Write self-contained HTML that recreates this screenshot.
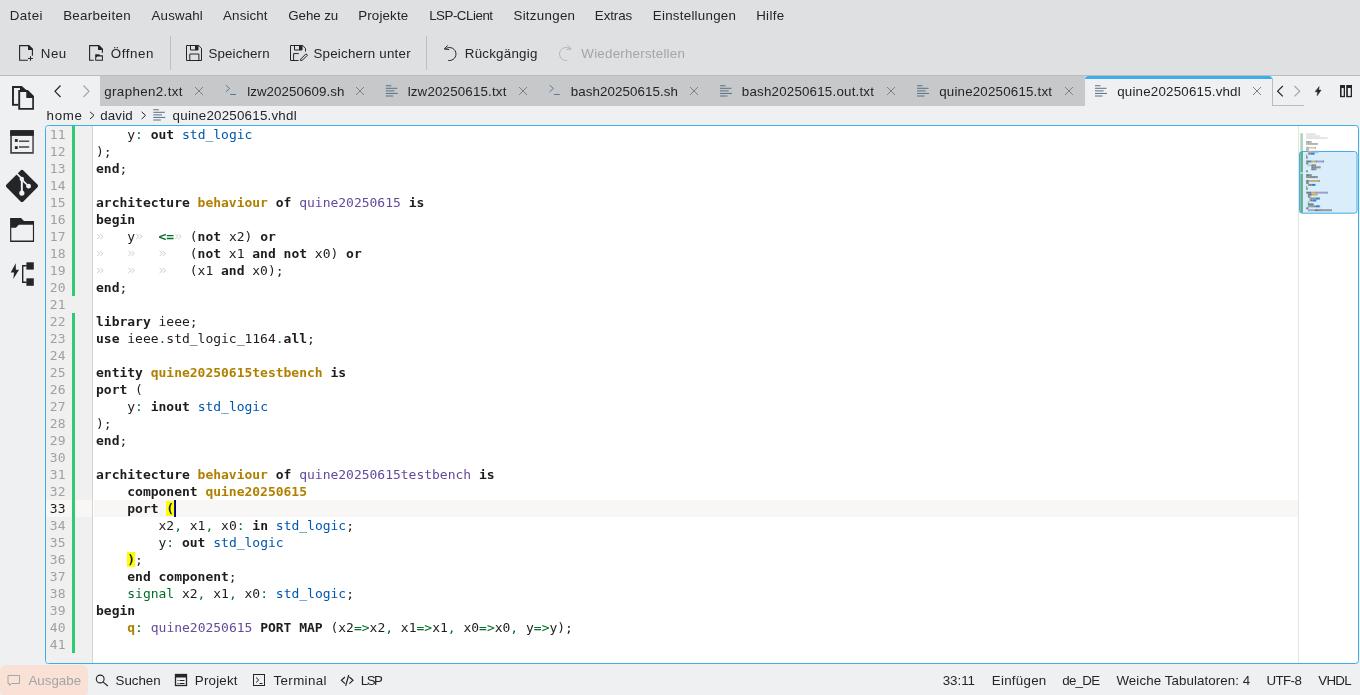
<!DOCTYPE html>
<html lang="de">
<head>
<meta charset="utf-8">
<title>quine20250615.vhdl — Kate</title>
<style>
html,body{margin:0;padding:0}
body{width:1360px;height:695px;overflow:hidden;position:relative;background:#eff0f1;
 font-family:"Liberation Sans","DejaVu Sans",sans-serif;font-size:13.33px;color:#232629}
.abs{position:absolute}
#header{left:0;top:0;width:1360px;height:75px;background:#dee0e2}
#hline{left:0;top:75px;width:1360px;height:1px;background:#bbbdbf}
.tsep{top:36px;width:1px;height:34px;background:#bcbec0}
#tabs{left:100px;top:76px;width:985px;height:30px;background:#c6c8c9}
#atab{left:1085px;top:76px;width:187px;height:30px;background:#eff0f1;border-top:3px solid #3daee9;
 border-radius:3px 3px 0 0;box-sizing:border-box}
#atabr{left:1272px;top:78px;width:1px;height:28px;background:#b9bbbd}
#atabb{left:1272px;top:105px;width:32px;height:1px;background:#b9bbbd}
#frame{left:45px;top:125px;width:1314px;height:539px;box-sizing:border-box;border:1px solid #3daee9;
 border-radius:3.5px;background:#fff;overflow:hidden}
#gutter{left:46px;top:126px;width:46px;height:537px;background:#f0f0f0;border-radius:3px 0 0 3px}
#gsep{left:92px;top:126px;width:1px;height:537px;background:#d5d5d5}
#curline{left:46px;top:500px;width:1252px;height:17px;background:#f8f7f6}
.mod{left:72px;width:3px;background:#2ecc71}
#mmsep{left:1298px;top:126px;width:1px;height:537px;background:#e4e4e4}
#ausg{left:0;top:665px;width:88px;height:32px;background:#f9e1d6;border-radius:6px}
.t{position:absolute;white-space:pre;line-height:16px;height:16px}
.m{color:#232629}.d{color:#a3a6a9}.g{color:#a3a5a7}
.ln,.no{position:absolute;font-family:"DejaVu Sans Mono","Liberation Mono",monospace;font-size:13px;
 line-height:17px;height:17px;white-space:pre;letter-spacing:-0.013px}
.ln{left:96px;color:#1f1c1b}
.no{left:46px;width:19.5px;text-align:right;color:#a0a0a0}
.no.cur{color:#1e1e1e}
.k{font-weight:bold}
.g{color:#006e28}.gk{color:#006e28;font-weight:bold}
.s{color:#006e28}
.b{color:#0057ae}
.y{color:#b08000;font-weight:bold}
.v{color:#644a9b}
.bm{font-weight:bold;background:#ffff00}
.t.g{color:#a3a5a7}
#caret{left:174px;top:500px;width:2px;height:17px;background:linear-gradient(90deg,#0606e4 0 50%,#0c0c0c 50% 100%)}
svg{position:absolute;left:0;top:0}
</style>
</head>
<body>
<div class="abs" id="header"></div>
<div class="abs" id="hline"></div>
<div class="abs tsep" style="left:170px"></div>
<div class="abs tsep" style="left:426px"></div>
<div class="abs" id="tabs"></div>
<div class="abs" id="atab"></div>
<div class="abs" id="atabr"></div>
<div class="abs" id="atabb"></div>
<div class="abs" id="frame"></div>
<div class="abs" id="gutter"></div>
<div class="abs" id="curline"></div>
<div class="abs" id="gsep"></div>
<div class="abs" style="left:93px;top:500px;width:1px;height:17px;background:#fff"></div>
<div class="abs mod" style="top:126px;height:170px"></div>
<div class="abs mod" style="top:313px;height:340px"></div>
<div class="abs" id="mmsep"></div>
<div class="abs" id="ausg"></div>

<div id="txt" style="position:absolute;left:0;top:0;width:1360px;height:695px;will-change:transform">
<!-- UI text -->
<span class="t m" style="left:9.84px;top:8.40px;letter-spacing:0.374px">Datei</span>
<span class="t m" style="left:63.14px;top:8.40px;letter-spacing:0.332px">Bearbeiten</span>
<span class="t m" style="left:151.61px;top:8.40px;letter-spacing:0.124px">Auswahl</span>
<span class="t m" style="left:223.12px;top:8.40px;letter-spacing:0.125px">Ansicht</span>
<span class="t m" style="left:288.31px;top:8.40px;letter-spacing:-0.093px">Gehe zu</span>
<span class="t m" style="left:358.14px;top:8.40px;letter-spacing:0.175px">Projekte</span>
<span class="t m" style="left:429.14px;top:8.40px;letter-spacing:-0.471px">LSP-CLient</span>
<span class="t m" style="left:513.46px;top:8.40px;letter-spacing:0.283px">Sitzungen</span>
<span class="t m" style="left:594.84px;top:8.40px;letter-spacing:-0.072px">Extras</span>
<span class="t m" style="left:652.84px;top:8.40px;letter-spacing:0.252px">Einstellungen</span>
<span class="t m" style="left:756.14px;top:8.40px;letter-spacing:0.367px">Hilfe</span>
<span class="t m" style="left:40.78px;top:46.40px;letter-spacing:0.500px">Neu</span>
<span class="t m" style="left:110.87px;top:46.40px;letter-spacing:0.555px">Öffnen</span>
<span class="t m" style="left:208.46px;top:46.40px;letter-spacing:0.135px">Speichern</span>
<span class="t m" style="left:313.46px;top:46.40px;letter-spacing:0.217px">Speichern unter</span>
<span class="t m" style="left:464.84px;top:46.40px;letter-spacing:0.232px">Rückgängig</span>
<span class="t d" style="left:581.36px;top:46.40px;letter-spacing:0.233px">Wiederherstellen</span>
<span class="t m" style="left:104.22px;top:84.40px;letter-spacing:0.381px">graphen2.txt</span>
<span class="t m" style="left:247.15px;top:84.40px;letter-spacing:0.073px">lzw20250609.sh</span>
<span class="t m" style="left:407.67px;top:84.40px;letter-spacing:0.169px">lzw20250615.txt</span>
<span class="t m" style="left:570.80px;top:84.40px;letter-spacing:0.081px">bash20250615.sh</span>
<span class="t m" style="left:741.80px;top:84.40px;letter-spacing:0.207px">bash20250615.out.txt</span>
<span class="t m" style="left:939.21px;top:84.40px;letter-spacing:0.191px">quine20250615.txt</span>
<span class="t m" style="left:1117.22px;top:84.40px;letter-spacing:0.201px">quine20250615.vhdl</span>
<span class="t m" style="left:46.55px;top:107.90px;letter-spacing:0.676px">home</span>
<span class="t m" style="left:100.22px;top:107.90px;letter-spacing:0.155px">david</span>
<span class="t m" style="left:172.61px;top:107.90px;letter-spacing:0.232px">quine20250615.vhdl</span>
<span class="t g" style="left:28.40px;top:673.40px;letter-spacing:0.007px">Ausgabe</span>
<span class="t m" style="left:115.57px;top:673.40px;letter-spacing:-0.045px">Suchen</span>
<span class="t m" style="left:194.85px;top:673.40px;letter-spacing:0.196px">Projekt</span>
<span class="t m" style="left:273.61px;top:673.40px;letter-spacing:0.343px">Terminal</span>
<span class="t m" style="left:360.85px;top:673.40px;letter-spacing:-1.542px">LSP</span>
<span class="t m" style="left:942.65px;top:673.40px;letter-spacing:-0.005px">33:11</span>
<span class="t m" style="left:991.78px;top:673.40px;letter-spacing:0.262px">Einfügen</span>
<span class="t m" style="left:1062.22px;top:673.40px;letter-spacing:-0.731px">de_DE</span>
<span class="t m" style="left:1116.44px;top:673.40px;letter-spacing:0.080px">Weiche Tabulatoren: 4</span>
<span class="t m" style="left:1266.45px;top:673.40px;letter-spacing:-0.586px">UTF-8</span>
<span class="t m" style="left:1318.33px;top:673.40px;letter-spacing:-0.735px">VHDL</span>

<!-- line numbers -->
<div class="no" style="top:126px">11</div>
<div class="no" style="top:143px">12</div>
<div class="no" style="top:160px">13</div>
<div class="no" style="top:177px">14</div>
<div class="no" style="top:194px">15</div>
<div class="no" style="top:211px">16</div>
<div class="no" style="top:228px">17</div>
<div class="no" style="top:245px">18</div>
<div class="no" style="top:262px">19</div>
<div class="no" style="top:279px">20</div>
<div class="no" style="top:296px">21</div>
<div class="no" style="top:313px">22</div>
<div class="no" style="top:330px">23</div>
<div class="no" style="top:347px">24</div>
<div class="no" style="top:364px">25</div>
<div class="no" style="top:381px">26</div>
<div class="no" style="top:398px">27</div>
<div class="no" style="top:415px">28</div>
<div class="no" style="top:432px">29</div>
<div class="no" style="top:449px">30</div>
<div class="no" style="top:466px">31</div>
<div class="no" style="top:483px">32</div>
<div class="no cur" style="top:500px">33</div>
<div class="no" style="top:517px">34</div>
<div class="no" style="top:534px">35</div>
<div class="no" style="top:551px">36</div>
<div class="no" style="top:568px">37</div>
<div class="no" style="top:585px">38</div>
<div class="no" style="top:602px">39</div>
<div class="no" style="top:619px">40</div>
<div class="no" style="top:636px">41</div>

<!-- code -->
<div class="ln" style="top:126px">    y<span class="g">:</span> <span class="k">out</span> <span class="b">std_logic</span></div>
<div class="ln" style="top:143px">);</div>
<div class="ln" style="top:160px"><span class="k">end</span>;</div>
<div class="ln" style="top:177px"></div>
<div class="ln" style="top:194px"><span class="k">architecture</span> <span class="y">behaviour</span> <span class="k">of</span> <span class="v">quine20250615</span> <span class="k">is</span></div>
<div class="ln" style="top:211px"><span class="k">begin</span></div>
<div class="ln" style="top:228px">    y   <span class="gk">&lt;=</span>  (<span class="k">not</span> x2) <span class="k">or</span></div>
<div class="ln" style="top:245px">            (<span class="k">not</span> x1 <span class="k">and</span> <span class="k">not</span> x0) <span class="k">or</span></div>
<div class="ln" style="top:262px">            (x1 <span class="k">and</span> x0);</div>
<div class="ln" style="top:279px"><span class="k">end</span>;</div>
<div class="ln" style="top:296px"></div>
<div class="ln" style="top:313px"><span class="k">library</span> ieee;</div>
<div class="ln" style="top:330px"><span class="k">use</span> ieee<span class="g">.</span>std_logic_1164<span class="g">.</span><span class="k">all</span>;</div>
<div class="ln" style="top:347px"></div>
<div class="ln" style="top:364px"><span class="k">entity</span> <span class="y">quine20250615testbench</span> <span class="k">is</span></div>
<div class="ln" style="top:381px"><span class="k">port</span> (</div>
<div class="ln" style="top:398px">    y<span class="g">:</span> <span class="k">inout</span> <span class="b">std_logic</span></div>
<div class="ln" style="top:415px">);</div>
<div class="ln" style="top:432px"><span class="k">end</span>;</div>
<div class="ln" style="top:449px"></div>
<div class="ln" style="top:466px"><span class="k">architecture</span> <span class="y">behaviour</span> <span class="k">of</span> <span class="v">quine20250615testbench</span> <span class="k">is</span></div>
<div class="ln" style="top:483px">    <span class="k">component</span> <span class="y">quine20250615</span></div>
<div class="ln cur" style="top:500px">    <span class="k">port</span> <span class="bm">(</span></div>
<div class="ln" style="top:517px">        x2<span class="g">,</span> x1<span class="g">,</span> x0<span class="g">:</span> <span class="k">in</span> <span class="b">std_logic</span>;</div>
<div class="ln" style="top:534px">        y<span class="g">:</span> <span class="k">out</span> <span class="b">std_logic</span></div>
<div class="ln" style="top:551px">    <span class="bm">)</span>;</div>
<div class="ln" style="top:568px">    <span class="k">end component</span>;</div>
<div class="ln" style="top:585px">    <span class="s">signal</span> x2<span class="g">,</span> x1<span class="g">,</span> x0<span class="g">:</span> <span class="b">std_logic</span>;</div>
<div class="ln" style="top:602px"><span class="k">begin</span></div>
<div class="ln" style="top:619px">    <span class="y">q</span><span class="g">:</span> <span class="v">quine20250615</span> <span class="k">PORT MAP</span> (x2<span class="g">=&gt;</span>x2<span class="g">,</span> x1<span class="g">=&gt;</span>x1<span class="g">,</span> x0<span class="g">=&gt;</span>x0<span class="g">,</span> y<span class="g">=&gt;</span>y);</div>
<div class="ln" style="top:636px"></div>
</div>
<div class="abs" id="caret"></div>

<svg width="1360" height="695" viewBox="0 0 1360 695" fill="none">
<!-- tab markers -->
<g stroke="#c6c6c6" stroke-width="0.9" fill="none"><path d="M97.1 234.1l2.8 2.4l-2.8 2.4M100.3 234.1l2.8 2.4l-2.8 2.4"/><path d="M136.2 234.1l2.8 2.4l-2.8 2.4M139.4 234.1l2.8 2.4l-2.8 2.4"/><path d="M175.2 234.1l2.8 2.4l-2.8 2.4M178.4 234.1l2.8 2.4l-2.8 2.4"/><path d="M97.1 251.1l2.8 2.4l-2.8 2.4M100.3 251.1l2.8 2.4l-2.8 2.4"/><path d="M128.4 251.1l2.8 2.4l-2.8 2.4M131.6 251.1l2.8 2.4l-2.8 2.4"/><path d="M159.6 251.1l2.8 2.4l-2.8 2.4M162.8 251.1l2.8 2.4l-2.8 2.4"/><path d="M97.1 268.1l2.8 2.4l-2.8 2.4M100.3 268.1l2.8 2.4l-2.8 2.4"/><path d="M128.4 268.1l2.8 2.4l-2.8 2.4M131.6 268.1l2.8 2.4l-2.8 2.4"/><path d="M159.6 268.1l2.8 2.4l-2.8 2.4M162.8 268.1l2.8 2.4l-2.8 2.4"/></g>

<!-- minimap -->
<rect x="1300.3" y="133.2" width="2.6" height="18.3" fill="#a9d6b7"/>
<rect x="1299.5" y="151.5" width="57.5" height="61.7" rx="2.5" fill="#d9edfa" stroke="#3daee9" stroke-width="1"/>
<rect x="1300.3" y="152" width="2.6" height="20.4" fill="#5fab8b"/>
<rect x="1300.3" y="173.6" width="2.6" height="39" fill="#5fab8b"/>
<g><rect x="1306.20" y="133.20" width="9.29" height="1.95" fill="#e4e4e4"/><rect x="1306.20" y="135.15" width="13.49" height="1.95" fill="#e4e4e4"/><rect x="1306.20" y="137.10" width="21.47" height="1.95" fill="#e4e4e4"/><rect x="1306.20" y="141.00" width="2.99" height="1.95" fill="#a6aaad"/><rect x="1309.14" y="141.00" width="2.57" height="1.95" fill="#b0b4b7"/><rect x="1306.20" y="142.95" width="1.31" height="1.95" fill="#a6aaad"/><rect x="1307.46" y="142.95" width="10.55" height="1.95" fill="#b0b4b7"/><rect x="1306.20" y="146.85" width="2.57" height="1.95" fill="#a6aaad"/><rect x="1308.72" y="146.85" width="0.47" height="1.95" fill="#b0b4b7"/><rect x="1309.14" y="146.85" width="5.51" height="1.95" fill="#e0d09c"/><rect x="1314.60" y="146.85" width="0.47" height="1.95" fill="#b0b4b7"/><rect x="1315.02" y="146.85" width="0.89" height="1.95" fill="#a6aaad"/><rect x="1306.20" y="148.80" width="1.73" height="1.95" fill="#a6aaad"/><rect x="1307.88" y="148.80" width="0.89" height="1.95" fill="#b0b4b7"/><rect x="1307.88" y="150.75" width="4.25" height="1.95" fill="#b0b4b7"/><rect x="1312.08" y="150.75" width="0.47" height="1.95" fill="#b0b4b7"/><rect x="1312.50" y="150.75" width="0.47" height="1.95" fill="#b0b4b7"/><rect x="1312.92" y="150.75" width="0.89" height="1.95" fill="#a6aaad"/><rect x="1313.76" y="150.75" width="0.47" height="1.95" fill="#b0b4b7"/><rect x="1314.18" y="150.75" width="3.83" height="1.95" fill="#86b4e2"/><rect x="1317.96" y="150.75" width="0.47" height="1.95" fill="#b0b4b7"/><rect x="1307.88" y="152.70" width="0.47" height="1.95" fill="#7f8a92"/><rect x="1308.30" y="152.70" width="0.47" height="1.95" fill="#7f8a92"/><rect x="1308.72" y="152.70" width="0.47" height="1.95" fill="#7f8a92"/><rect x="1309.14" y="152.70" width="1.31" height="1.95" fill="#727e86"/><rect x="1310.40" y="152.70" width="0.47" height="1.95" fill="#7f8a92"/><rect x="1310.82" y="152.70" width="3.83" height="1.95" fill="#2f7fcc"/><rect x="1306.20" y="154.65" width="0.89" height="1.95" fill="#7f8a92"/><rect x="1306.20" y="156.60" width="1.31" height="1.95" fill="#727e86"/><rect x="1307.46" y="156.60" width="0.47" height="1.95" fill="#7f8a92"/><rect x="1306.20" y="160.50" width="5.09" height="1.95" fill="#727e86"/><rect x="1311.24" y="160.50" width="0.47" height="1.95" fill="#7f8a92"/><rect x="1311.66" y="160.50" width="3.83" height="1.95" fill="#c4b272"/><rect x="1315.44" y="160.50" width="0.47" height="1.95" fill="#7f8a92"/><rect x="1315.86" y="160.50" width="0.89" height="1.95" fill="#727e86"/><rect x="1316.70" y="160.50" width="0.47" height="1.95" fill="#7f8a92"/><rect x="1317.12" y="160.50" width="5.51" height="1.95" fill="#a39ad6"/><rect x="1322.58" y="160.50" width="0.47" height="1.95" fill="#7f8a92"/><rect x="1323.00" y="160.50" width="0.89" height="1.95" fill="#727e86"/><rect x="1306.20" y="162.45" width="2.15" height="1.95" fill="#727e86"/><rect x="1307.88" y="164.40" width="0.47" height="1.95" fill="#7f8a92"/><rect x="1309.56" y="164.40" width="0.89" height="1.95" fill="#6fae8c"/><rect x="1311.24" y="164.40" width="0.47" height="1.95" fill="#7f8a92"/><rect x="1311.66" y="164.40" width="1.31" height="1.95" fill="#727e86"/><rect x="1312.92" y="164.40" width="2.15" height="1.95" fill="#7f8a92"/><rect x="1315.02" y="164.40" width="0.89" height="1.95" fill="#727e86"/><rect x="1311.24" y="166.35" width="0.47" height="1.95" fill="#7f8a92"/><rect x="1311.66" y="166.35" width="1.31" height="1.95" fill="#727e86"/><rect x="1312.92" y="166.35" width="1.73" height="1.95" fill="#7f8a92"/><rect x="1314.60" y="166.35" width="1.31" height="1.95" fill="#727e86"/><rect x="1315.86" y="166.35" width="0.47" height="1.95" fill="#7f8a92"/><rect x="1316.28" y="166.35" width="1.31" height="1.95" fill="#727e86"/><rect x="1317.54" y="166.35" width="2.15" height="1.95" fill="#7f8a92"/><rect x="1319.64" y="166.35" width="0.89" height="1.95" fill="#727e86"/><rect x="1311.24" y="168.30" width="1.73" height="1.95" fill="#7f8a92"/><rect x="1312.92" y="168.30" width="1.31" height="1.95" fill="#727e86"/><rect x="1314.18" y="168.30" width="2.15" height="1.95" fill="#7f8a92"/><rect x="1306.20" y="170.25" width="1.31" height="1.95" fill="#727e86"/><rect x="1307.46" y="170.25" width="0.47" height="1.95" fill="#7f8a92"/><rect x="1306.20" y="174.15" width="2.99" height="1.95" fill="#727e86"/><rect x="1309.14" y="174.15" width="2.57" height="1.95" fill="#7f8a92"/><rect x="1306.20" y="176.10" width="1.31" height="1.95" fill="#727e86"/><rect x="1307.46" y="176.10" width="2.15" height="1.95" fill="#7f8a92"/><rect x="1309.56" y="176.10" width="0.47" height="1.95" fill="#7f8a92"/><rect x="1309.98" y="176.10" width="5.93" height="1.95" fill="#7f8a92"/><rect x="1315.86" y="176.10" width="0.47" height="1.95" fill="#7f8a92"/><rect x="1316.28" y="176.10" width="1.31" height="1.95" fill="#727e86"/><rect x="1317.54" y="176.10" width="0.47" height="1.95" fill="#7f8a92"/><rect x="1306.20" y="180.00" width="2.57" height="1.95" fill="#727e86"/><rect x="1308.72" y="180.00" width="0.47" height="1.95" fill="#7f8a92"/><rect x="1309.14" y="180.00" width="9.29" height="1.95" fill="#c4b272"/><rect x="1318.38" y="180.00" width="0.47" height="1.95" fill="#7f8a92"/><rect x="1318.80" y="180.00" width="0.89" height="1.95" fill="#727e86"/><rect x="1306.20" y="181.95" width="1.73" height="1.95" fill="#727e86"/><rect x="1307.88" y="181.95" width="0.89" height="1.95" fill="#7f8a92"/><rect x="1307.88" y="183.90" width="0.47" height="1.95" fill="#7f8a92"/><rect x="1308.30" y="183.90" width="0.47" height="1.95" fill="#7f8a92"/><rect x="1308.72" y="183.90" width="0.47" height="1.95" fill="#7f8a92"/><rect x="1309.14" y="183.90" width="2.15" height="1.95" fill="#727e86"/><rect x="1311.24" y="183.90" width="0.47" height="1.95" fill="#7f8a92"/><rect x="1311.66" y="183.90" width="3.83" height="1.95" fill="#2f7fcc"/><rect x="1306.20" y="185.85" width="0.89" height="1.95" fill="#7f8a92"/><rect x="1306.20" y="187.80" width="1.31" height="1.95" fill="#727e86"/><rect x="1307.46" y="187.80" width="0.47" height="1.95" fill="#7f8a92"/><rect x="1306.20" y="191.70" width="5.09" height="1.95" fill="#727e86"/><rect x="1311.24" y="191.70" width="0.47" height="1.95" fill="#7f8a92"/><rect x="1311.66" y="191.70" width="3.83" height="1.95" fill="#c4b272"/><rect x="1315.44" y="191.70" width="0.47" height="1.95" fill="#7f8a92"/><rect x="1315.86" y="191.70" width="0.89" height="1.95" fill="#727e86"/><rect x="1316.70" y="191.70" width="0.47" height="1.95" fill="#7f8a92"/><rect x="1317.12" y="191.70" width="9.29" height="1.95" fill="#a39ad6"/><rect x="1326.36" y="191.70" width="0.47" height="1.95" fill="#7f8a92"/><rect x="1326.78" y="191.70" width="0.89" height="1.95" fill="#727e86"/><rect x="1307.88" y="193.65" width="3.83" height="1.95" fill="#727e86"/><rect x="1311.66" y="193.65" width="0.47" height="1.95" fill="#7f8a92"/><rect x="1312.08" y="193.65" width="5.51" height="1.95" fill="#c4b272"/><rect x="1307.88" y="195.60" width="1.73" height="1.95" fill="#727e86"/><rect x="1309.56" y="195.60" width="0.47" height="1.95" fill="#7f8a92"/><rect x="1309.98" y="195.60" width="0.47" height="1.95" fill="#727e86"/><rect x="1309.56" y="197.55" width="0.89" height="1.95" fill="#7f8a92"/><rect x="1310.40" y="197.55" width="0.47" height="1.95" fill="#7f8a92"/><rect x="1310.82" y="197.55" width="1.31" height="1.95" fill="#7f8a92"/><rect x="1312.08" y="197.55" width="0.47" height="1.95" fill="#7f8a92"/><rect x="1312.50" y="197.55" width="1.31" height="1.95" fill="#7f8a92"/><rect x="1313.76" y="197.55" width="0.47" height="1.95" fill="#7f8a92"/><rect x="1314.18" y="197.55" width="0.47" height="1.95" fill="#7f8a92"/><rect x="1314.60" y="197.55" width="0.89" height="1.95" fill="#727e86"/><rect x="1315.44" y="197.55" width="0.47" height="1.95" fill="#7f8a92"/><rect x="1315.86" y="197.55" width="3.83" height="1.95" fill="#2f7fcc"/><rect x="1319.64" y="197.55" width="0.47" height="1.95" fill="#7f8a92"/><rect x="1309.56" y="199.50" width="0.47" height="1.95" fill="#7f8a92"/><rect x="1309.98" y="199.50" width="0.47" height="1.95" fill="#7f8a92"/><rect x="1310.40" y="199.50" width="0.47" height="1.95" fill="#7f8a92"/><rect x="1310.82" y="199.50" width="1.31" height="1.95" fill="#727e86"/><rect x="1312.08" y="199.50" width="0.47" height="1.95" fill="#7f8a92"/><rect x="1312.50" y="199.50" width="3.83" height="1.95" fill="#2f7fcc"/><rect x="1307.88" y="201.45" width="0.47" height="1.95" fill="#727e86"/><rect x="1308.30" y="201.45" width="0.47" height="1.95" fill="#7f8a92"/><rect x="1307.88" y="203.40" width="5.51" height="1.95" fill="#727e86"/><rect x="1313.34" y="203.40" width="0.47" height="1.95" fill="#7f8a92"/><rect x="1307.88" y="205.35" width="2.57" height="1.95" fill="#6fae8c"/><rect x="1310.40" y="205.35" width="1.31" height="1.95" fill="#7f8a92"/><rect x="1311.66" y="205.35" width="0.47" height="1.95" fill="#7f8a92"/><rect x="1312.08" y="205.35" width="1.31" height="1.95" fill="#7f8a92"/><rect x="1313.34" y="205.35" width="0.47" height="1.95" fill="#7f8a92"/><rect x="1313.76" y="205.35" width="1.31" height="1.95" fill="#7f8a92"/><rect x="1315.02" y="205.35" width="0.47" height="1.95" fill="#7f8a92"/><rect x="1315.44" y="205.35" width="0.47" height="1.95" fill="#7f8a92"/><rect x="1315.86" y="205.35" width="3.83" height="1.95" fill="#2f7fcc"/><rect x="1319.64" y="205.35" width="0.47" height="1.95" fill="#7f8a92"/><rect x="1306.20" y="207.30" width="2.15" height="1.95" fill="#727e86"/><rect x="1307.88" y="209.25" width="0.47" height="1.95" fill="#c4b272"/><rect x="1308.30" y="209.25" width="0.47" height="1.95" fill="#7f8a92"/><rect x="1308.72" y="209.25" width="0.47" height="1.95" fill="#7f8a92"/><rect x="1309.14" y="209.25" width="5.51" height="1.95" fill="#a39ad6"/><rect x="1314.60" y="209.25" width="0.47" height="1.95" fill="#7f8a92"/><rect x="1315.02" y="209.25" width="3.41" height="1.95" fill="#727e86"/><rect x="1318.38" y="209.25" width="1.73" height="1.95" fill="#7f8a92"/><rect x="1320.06" y="209.25" width="0.89" height="1.95" fill="#7f8a92"/><rect x="1320.90" y="209.25" width="0.89" height="1.95" fill="#7f8a92"/><rect x="1321.74" y="209.25" width="0.47" height="1.95" fill="#7f8a92"/><rect x="1322.16" y="209.25" width="1.31" height="1.95" fill="#7f8a92"/><rect x="1323.42" y="209.25" width="0.89" height="1.95" fill="#7f8a92"/><rect x="1324.26" y="209.25" width="0.89" height="1.95" fill="#7f8a92"/><rect x="1325.10" y="209.25" width="0.47" height="1.95" fill="#7f8a92"/><rect x="1325.52" y="209.25" width="1.31" height="1.95" fill="#7f8a92"/><rect x="1326.78" y="209.25" width="0.89" height="1.95" fill="#7f8a92"/><rect x="1327.62" y="209.25" width="0.89" height="1.95" fill="#7f8a92"/><rect x="1328.46" y="209.25" width="0.47" height="1.95" fill="#7f8a92"/><rect x="1328.88" y="209.25" width="0.89" height="1.95" fill="#7f8a92"/><rect x="1329.72" y="209.25" width="0.89" height="1.95" fill="#7f8a92"/><rect x="1330.56" y="209.25" width="1.31" height="1.95" fill="#7f8a92"/></g>

<!-- toolbar icons -->
<g stroke="#232629" stroke-width="1" fill="none">
 <!-- new -->
 <path d="M27.84 60.2H19.6V45.6H28.7L32.4 49.3V55.7" stroke-width="1.1" stroke-linejoin="miter"/>
 <path d="M28.03 45.05H28.96L32.9 48.98V49.9H28.03Z" fill="#232629" stroke="none"/>
 <path d="M30.5 56.1V60.76M28.03 58.5H32.9"/>
 <!-- open -->
 <path d="M93.8 60.2H89.6V45.6H98.7L102.4 49.3V52.7" stroke-width="1.1" stroke-linejoin="miter"/>
 <path d="M98.03 45.05H98.96L102.9 48.98V49.9H98.03Z" fill="#232629" stroke="none"/>
 <path d="M95.2 54.2H99L100.1 55.15H102.9V60.76H95.2Z" fill="#232629" stroke="none"/>
 <path d="M96.2 57.6L97.5 56.46H101.9V59.64H96.2Z" fill="#dee0e2" stroke="none"/>
 <!-- save -->
 <path d="M186.5 45.5H198.7L201.5 48.3V60.5H186.5Z"/>
 <path d="M190.5 45.5V50H198V45.5"/>
 <rect x="195" y="45.5" width="3" height="4.5" fill="#232629" stroke="none"/>
 <path d="M189.8 60.5V54H198.9V60.5"/>
 <!-- save as -->
 <path d="M298.5 60.5H290.5V45.5H302.7L305.5 48.3V51.5"/>
 <path d="M294.5 45.5V50H302V45.5"/>
 <rect x="299" y="45.5" width="3" height="4.5" fill="#232629" stroke="none"/>
 <path d="M293.6 60.5V53.6H298.8"/>
 <path d="M300.3 60.4L300.6 59.2L305.9 53.9L307.5 55.3L302 60.4Z"/>
 <!-- undo -->
 <path d="M444.9 49.4A6.5 6.5 0 1 1 448.2 60.4"/>
 <path d="M447.8 45.3L444.3 48.9L449.2 49.6"/>
</g>
<g stroke="#b3b5b7" stroke-width="1" fill="none">
 <!-- redo -->
 <path d="M570.6 49.4A6.5 6.5 0 1 0 567.3 60.4"/>
 <path d="M567.7 45.3L571.2 48.9L566.3 49.6"/>
</g>

<!-- tab bar nav + icons -->
<g stroke="#232629" stroke-width="1.2" fill="none">
 <path d="M60.5 85.5L55 91.3L60.5 97"/>
 <path d="M1282.8 86L1277.6 91.2L1282.8 96.4"/>
</g>
<g stroke="#a3a5a7" stroke-width="1.2" fill="none">
 <path d="M83.5 85.5L89 91.3L83.5 97"/>
 <path d="M1294.5 86L1299.7 91.2L1294.5 96.4"/>
</g>
<!-- close X -->
<g stroke="#7d8184" stroke-width="1" fill="none">
 <path d="M195 87l8 8m0 -8l-8 8"/>
 <path d="M356 87l8 8m0 -8l-8 8"/>
 <path d="M519 87l8 8m0 -8l-8 8"/>
 <path d="M690 87l8 8m0 -8l-8 8"/>
 <path d="M887 87l8 8m0 -8l-8 8"/>
 <path d="M1065 87l8 8m0 -8l-8 8"/>
 <path d="M1253 87l8 8m0 -8l-8 8"/>
</g>
<!-- terminal icons -->
<g stroke="#5a7896" stroke-width="1" fill="none">
 <path d="M225.8 85.2L229.6 88.5L225.8 91.8M230.2 94.5H236"/>
 <path d="M549.6 85.2L553.4 88.5L549.6 91.8M554 94.5H559.8"/>
</g>
<!-- text file icons -->
<g stroke="#5a7088" stroke-width="1" fill="none">
 <path d="M385.8 85.75h5.5M385.8 88.3h11.5M385.8 90.9h8.7M385.8 93.45h12M385.8 96h7.5"/>
 <path d="M720 85.75h5.5M720 88.3h11.5M720 90.9h8.7M720 93.45h12M720 96h7.5"/>
 <path d="M917 85.75h5.5M917 88.3h11.5M917 90.9h8.7M917 93.45h12M917 96h7.5"/>
 <path d="M1095 85.75h5.5M1095 88.3h11.5M1095 90.9h8.7M1095 93.45h12M1095 96h7.5"/>
 <path d="M153.3 109.75h5.5M153.3 112.3h11.5M153.3 114.9h8.7M153.3 117.45h12M153.3 120h7.5"/>
</g>
<!-- breadcrumb chevrons -->
<g stroke="#232629" stroke-width="1" fill="none">
 <path d="M90 111.8L94 115.4L90 119"/>
 <path d="M141.6 111.8L145.6 115.4L141.6 119"/>
</g>
<!-- lightning + split -->
<path d="M1319.2 86.6L1315.1 91.8H1317.6L1317.2 95.7L1321.1 90.1H1318.6Z" fill="#232629" stroke="#232629" stroke-width="0.5" stroke-linejoin="round"/>
<g stroke="none">
 <rect x="1340" y="85" width="5" height="12.2" fill="#232629"/>
 <rect x="1341.6" y="88" width="2.1" height="7.9" fill="#eff0f1"/>
 <rect x="1346.2" y="85" width="5.8" height="12.2" fill="#232629"/>
 <rect x="1347.9" y="88" width="2.8" height="7.9" fill="#eff0f1"/>
</g>

<!-- sidebar icons -->
<g stroke="none">
 <path d="M12.03 86.1H21.9L26.3 90.1V92H18.25V105.8H12.03Z" fill="#232629"/>
 <rect x="13.95" y="88.03" width="6.01" height="15.87" fill="#eff0f1"/>
 <path d="M18.25 90.1H27.94L33.95 96.06V109.8H18.25Z" fill="#232629"/>
 <path d="M20.17 92.02H26.28V97.9H32.24V107.98H20.17Z" fill="#eff0f1"/>
</g>
<g stroke="none">
 <rect x="10.2" y="130.2" width="23.6" height="23.6" fill="#45484b"/>
 <rect x="10.2" y="130.2" width="23.6" height="5.7" fill="#232629"/>
 <rect x="11.95" y="135.9" width="20.35" height="16.1" fill="#eff0f1"/>
 <rect x="14.9" y="139.1" width="2.8" height="2.8" fill="#232629"/>
 <rect x="14.9" y="146.2" width="2.8" height="2.8" fill="#232629"/>
 <rect x="19" y="140.5" width="10.2" height="1.4" fill="#3a3d40"/>
 <rect x="19" y="146.2" width="10.2" height="1.6" fill="#4a4d50"/>
</g>
<!-- git -->
<rect x="10.05" y="173.95" width="23.9" height="23.9" rx="2" transform="rotate(45 22 185.9)" fill="#232629"/>
<g stroke="#eff0f1" fill="none">
 <path d="M16.6 173.4L21.85 178.7" stroke-width="1.7"/>
 <path d="M21.85 178.9V193" stroke-width="2"/>
 <path d="M22.6 180.3L28.3 186" stroke-width="1.7"/>
</g>
<circle cx="21.85" cy="179" r="2.2" fill="#eff0f1"/>
<circle cx="21.85" cy="193.05" r="2.6" fill="#eff0f1"/>
<circle cx="28.6" cy="186.15" r="2.4" fill="#eff0f1"/>
<!-- folder -->
<path d="M10.1 218.1H21.1L23.95 221.07H34.05V241.95H10.1Z" fill="#232629"/>
<path d="M11.3 227.65H15.9L18.8 224.7H32.9V240.6H11.3Z" fill="#eff0f1"/>
<!-- lsp / tree -->
<path d="M15.7 263.3L10.7 272.5H14.1L13.3 279L19 269.7H15.9Z" fill="#232629"/>
<path d="M26.6 265.8H22.7V282.25H26.6" stroke="#232629" stroke-width="1.4" fill="none"/>
<rect x="26.4" y="262.3" width="7.4" height="7.3" fill="#232629"/>
<rect x="26.4" y="278.3" width="7.4" height="7.5" fill="#232629"/>

<!-- status bar icons -->
<g stroke="#a3a5a7" stroke-width="1" fill="none">
 <path d="M8 675.5H19.5V683.5H11.5L9.5 685.5V683.5H8Z"/>
</g>
<g stroke="#232629" stroke-width="1.1" fill="none">
 <circle cx="100.2" cy="679" r="3.9"/>
 <path d="M103 681.8L107.8 686"/>
</g>
<g stroke="#232629" stroke-width="1" fill="none">
 <rect x="175.5" y="674.5" width="11" height="11" stroke-width="1.3"/>
 <rect x="175.5" y="674.5" width="11" height="2.5" fill="#232629"/>
 <path d="M179.5 680.5H184.5M179.5 683.5H184.5"/>
 <path d="M177.5 680.5H178.5M177.5 683.5H178.5"/>
 <rect x="253.5" y="674.5" width="11" height="11"/>
 <path d="M256 677.5L258.8 680L256 682.5M259.5 683.5H262.5"/>
 <path d="M345 677L341.4 680.3L345 683.6M349.4 677L353 680.3L349.4 683.6M348.7 675L345.7 685.8" stroke-width="1.2"/>
</g>
</svg>
</body>
</html>
